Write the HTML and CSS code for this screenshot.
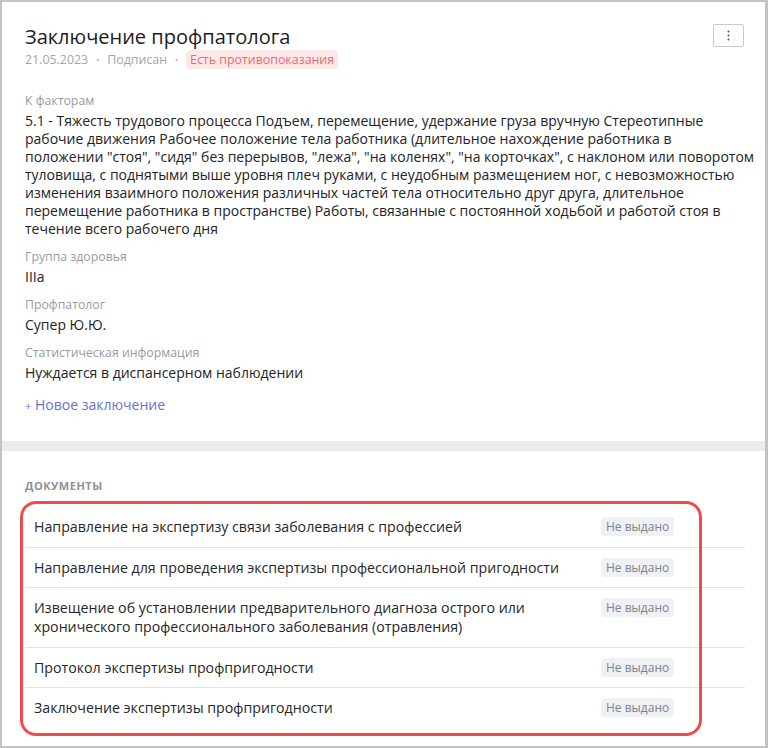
FILE: index.html
```html
<!DOCTYPE html>
<html lang="ru">
<head>
<meta charset="utf-8">
<title>Заключение профпатолога</title>
<link rel="stylesheet" href="styles.css">
</head>
<body>
<div class="page">
  <section class="card">
    <div class="head">
      <div class="head-main">
        <h1 class="title">Заключение профпатолога</h1>
        <div class="meta">
          <span>21.05.2023</span>
          <span class="dot">•</span>
          <span>Подписан</span>
          <span class="dot">•</span>
          <span class="tag-danger">Есть противопоказания</span>
        </div>
      </div>
      <button class="kebab" type="button" aria-label="Меню">
        <svg width="3" height="11" viewBox="0 0 3 11"><circle cx="1.5" cy="1.5" r="1" fill="#555"/><circle cx="1.5" cy="5.5" r="1" fill="#555"/><circle cx="1.5" cy="9.5" r="1" fill="#555"/></svg>
      </button>
    </div>

    <div class="fields">
      <div class="field">
        <div class="label">К факторам</div>
        <div class="value">5.1 - Тяжесть трудового процесса Подъем, перемещение, удержание груза вручную Стереотипные<br>рабочие движения Рабочее положение тела работника (длительное нахождение работника в<br>положении "стоя", "сидя" без перерывов, "лежа", "на коленях", "на корточках", с наклоном или поворотом<br>туловища, с поднятыми выше уровня плеч руками, с неудобным размещением ног, с невозможностью<br>изменения взаимного положения различных частей тела относительно друг друга, длительное<br>перемещение работника в пространстве) Работы, связанные с постоянной ходьбой и работой стоя в<br>течение всего рабочего дня</div>
      </div>
      <div class="field">
        <div class="label">Группа здоровья</div>
        <div class="value">IIIа</div>
      </div>
      <div class="field">
        <div class="label">Профпатолог</div>
        <div class="value">Супер Ю.Ю.</div>
      </div>
      <div class="field">
        <div class="label">Статистическая информация</div>
        <div class="value">Нуждается в диспансерном наблюдении</div>
      </div>
    </div>
    <a class="add-link" href="#"><span class="plus">+</span> Новое заключение</a>
  </section>

  <div class="band"></div>

  <section class="docs">
    <h2 class="docs-title">Документы</h2>
    <div class="doc-list">
      <div class="highlight"></div>
      <div class="doc-row">
        <div class="doc-name">Направление на экспертизу связи заболевания с профессией</div>
        <div class="doc-status"><span class="tag-muted">Не выдано</span></div>
      </div>
      <div class="doc-row">
        <div class="doc-name">Направление для проведения экспертизы профессиональной пригодности</div>
        <div class="doc-status"><span class="tag-muted">Не выдано</span></div>
      </div>
      <div class="doc-row">
        <div class="doc-name">Извещение об установлении предварительного диагноза острого или хронического профессионального заболевания (отравления)</div>
        <div class="doc-status"><span class="tag-muted">Не выдано</span></div>
      </div>
      <div class="doc-row">
        <div class="doc-name">Протокол экспертизы профпригодности</div>
        <div class="doc-status"><span class="tag-muted">Не выдано</span></div>
      </div>
      <div class="doc-row">
        <div class="doc-name">Заключение экспертизы профпригодности</div>
        <div class="doc-status"><span class="tag-muted">Не выдано</span></div>
      </div>
    </div>
  </section>
</div>
</body>
</html>
```

FILE: styles.css
```css
* { box-sizing: border-box; }

html, body {
  margin: 0;
  padding: 0;
}

body {
  background: #c3c3c3;
  font-family: "Open Sans", "Noto Sans", sans-serif;
  color: #222326;
  padding: 2px 3px 2px 2px;
  height: 748px;
  overflow: hidden;
}

.page {
  background: #ffffff;
  height: 744px;
  overflow: hidden;
}

.card {
  padding: 22px 6px 26px 23px;
}

.head {
  display: flex;
  justify-content: space-between;
  align-items: flex-start;
  padding-right: 15px;
}

.title {
  margin: 0;
  font-size: 20px;
  line-height: 26px;
  font-weight: 500;
  color: #1c1c1e;
}

.meta {
  display: flex;
  align-items: center;
  gap: 8px;
  height: 19px;
  font-size: 12.4px;
  color: #a2a3aa;
}

.dot {
  font-size: 8px;
  color: #a2a3aa;
}

.tag-danger {
  background: #fde8e9;
  color: #e66c6f;
  border-radius: 4px;
  padding: 0 4px;
  line-height: 19px;
}

.kebab {
  width: 31px;
  height: 23px;
  border: 1px solid #c9c9cc;
  border-radius: 2px;
  background: #fff;
  padding: 0;
  display: flex;
  align-items: center;
  justify-content: center;
}

.fields {
  margin-top: 23px;
}

.field {
  margin-bottom: 10px;
}

.label {
  font-size: 12.3px;
  line-height: 18px;
  color: #9a9ba1;
  margin-bottom: 2px;
}

.value {
  font-size: 14px;
  line-height: 18px;
  color: #222326;
}

.add-link {
  display: inline-block;
  margin-top: 4px;
  font-size: 14px;
  line-height: 18px;
  color: #6b6fd9;
  text-decoration: none;
}

.plus {
  font-size: 11px;
}

.band {
  height: 10px;
  background: #ebecee;
}

.docs {
  padding: 27px 20px 0 23px;
}

.docs-title {
  margin: 0 0 13px;
  font-size: 11px;
  line-height: 16px;
  font-weight: 700;
  letter-spacing: 0.5px;
  text-transform: uppercase;
  color: #8e9096;
}

.doc-list {
  position: relative;
}

.doc-row {
  display: grid;
  grid-template-columns: 1fr 144px;
  column-gap: 12px;
  padding: 10px 0 10.5px 9px;
  border-bottom: 1px solid #e3e3e5;
}

.doc-row:last-child {
  border-bottom: none;
}

.doc-name {
  font-size: 14.2px;
  line-height: 19px;
  color: #26272b;
}

.doc-status {
  display: flex;
  align-items: flex-start;
}

.tag-muted {
  background: #f0f1f4;
  color: #7d8190;
  font-size: 12px;
  line-height: 19px;
  padding: 0 5px;
  border-radius: 4px;
}

.highlight {
  position: absolute;
  left: -5px;
  top: -6px;
  width: 682px;
  height: 235px;
  border: 3px solid #f24a4a;
  border-radius: 16px;
  pointer-events: none;
}
```
